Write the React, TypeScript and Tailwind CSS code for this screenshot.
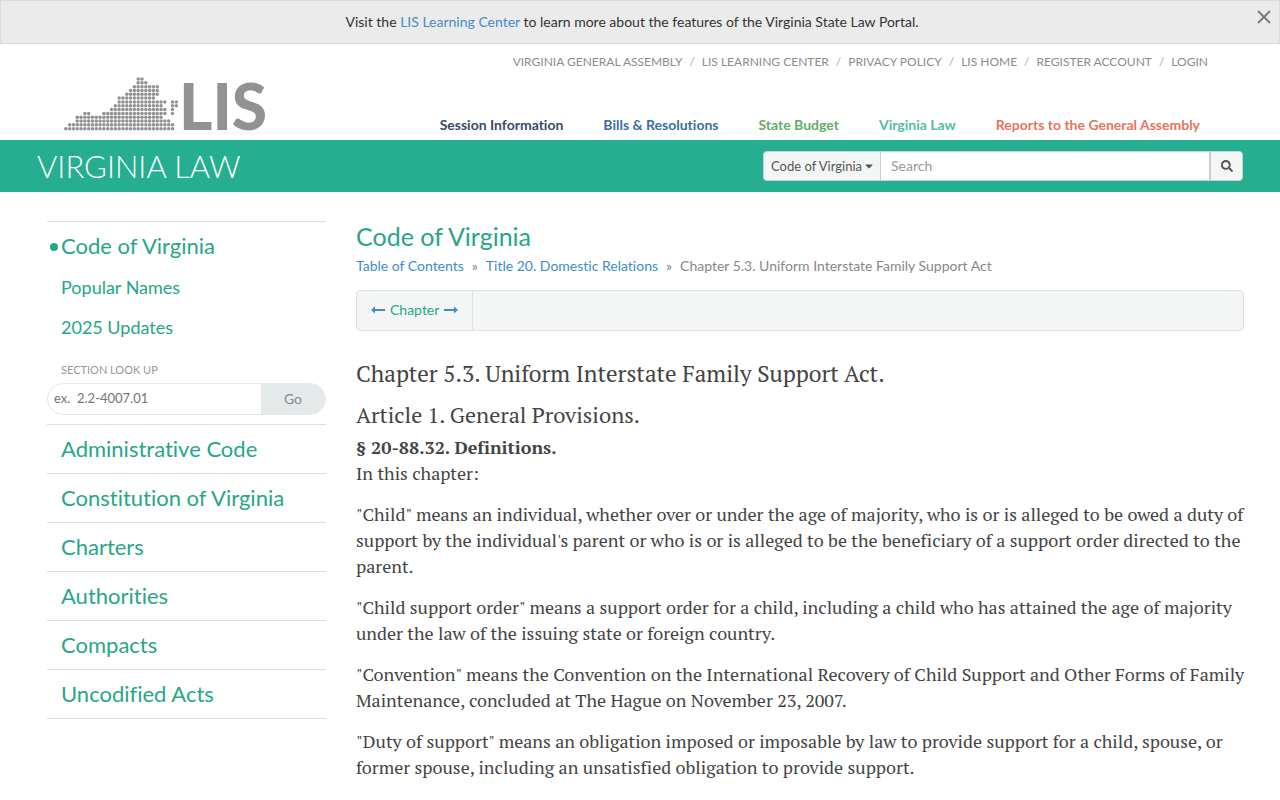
import React, { useState } from 'react';
import { X } from 'lucide-react';
import { FaSearch, FaCaretDown } from 'react-icons/fa';

// [row, first column, last column]
const MAP_RUNS = [
  [0, 19, 20],
  [1, 19, 21],
  [2, 18, 24],
  [3, 17, 24],
  [4, 16, 24],
  [5, 14, 23],
  [6, 14, 26], [6, 28, 29],
  [7, 13, 25], [7, 28, 29],
  [8, 12, 26], [8, 28, 28],
  [9, 5, 6], [9, 10, 26], [9, 28, 28],
  [10, 3, 25],
  [11, 3, 27],
  [12, 1, 28],
  [13, 0, 28],
];

const topLinks = ['Virginia General Assembly', 'LIS Learning Center', 'Privacy Policy', 'LIS Home', 'Register Account', 'Login'];

const portals = [
  { label: 'Session Information', color: 'text-[#3b4a66]' },
  { label: 'Bills & Resolutions', color: 'text-[#3a6ea5]' },
  { label: 'State Budget', color: 'text-[#5fad6c]' },
  { label: 'Virginia Law', color: 'text-[#54bfa3]' },
  { label: 'Reports to the General Assembly', color: 'text-[#e8735f]' },
];

const sections = ['Administrative Code', 'Constitution of Virginia', 'Charters', 'Authorities', 'Compacts', 'Uncodified Acts'];

const definitions = [
  '"Child" means an individual, whether over or under the age of majority, who is or is alleged to be owed a duty of support by the individual\'s parent or who is or is alleged to be the beneficiary of a support order directed to the parent.',
  '"Child support order" means a support order for a child, including a child who has attained the age of majority under the law of the issuing state or foreign country.',
  '"Convention" means the Convention on the International Recovery of Child Support and Other Forms of Family Maintenance, concluded at The Hague on November 23, 2007.',
  '"Duty of support" means an obligation imposed or imposable by law to provide support for a child, spouse, or former spouse, including an unsatisfied obligation to provide support.',
];

const Logo: React.FC = () => {
  const dots: React.ReactNode[] = [];
  MAP_RUNS.forEach(([row, from, to]) => {
    for (let col = from; col <= to; col++) {
      dots.push(<circle key={`${row}-${col}`} cx={1.8 + col * 3.81} cy={2 + row * 3.82} r="1.75" />);
    }
  });

  return (
    <svg width="208" height="56" viewBox="0 0 208 56" className="overflow-visible fill-[#929292]" role="img" aria-label="LIS">
      {dots}
      <text x="115" y="53" className="font-['Lato',sans-serif] text-[64px] font-black">LIS</text>
    </svg>
  );
};

const Arrow: React.FC<{ flip?: boolean }> = ({ flip }) => (
  <svg width="14" height="8" viewBox="0 0 14 8" className={flip ? 'rotate-180 fill-[#428bca]' : 'fill-[#428bca]'}>
    <path d="M0 4 L4 0.6 V3 H14 V5 H4 V7.4 Z" />
  </svg>
);

const Header: React.FC = () => (
  <header>
    <div className="flex items-start justify-between pl-16 pr-[72px] pt-2.5 h-24">
      <a href="#" className="mt-[23px]"><Logo /></a>
      <div className="flex flex-col items-end">
        <ul className="flex text-xs uppercase text-[#8c8c8c]">
          {topLinks.map((link, i) => (
            <li key={link}>
              {i > 0 && <span className="px-[7px] text-[#aaa]">/</span>}
              <a href="#">{link}</a>
            </li>
          ))}
        </ul>
        <nav className="flex gap-10 mt-[45px] pr-2 text-sm font-bold">
          {portals.map((p) => (
            <a key={p.label} href="#" className={p.color}>{p.label}</a>
          ))}
        </nav>
      </div>
    </div>

    <div className="flex items-center justify-between h-[52px] px-[37px] bg-[#26ae90]">
      <a href="#" className="text-[31px] font-light uppercase text-white">Virginia Law</a>
      <form className="flex w-[480px] h-[30px] rounded-sm overflow-hidden border border-[#c4d6d2] bg-white text-sm" onSubmit={(e) => e.preventDefault()}>
        <div className="relative w-[117px] border-r border-[#ccc] bg-[#f4f6f6]">
          <select aria-label="Search in" className="appearance-none w-full h-full pl-[7px] text-[13px] text-[#555] outline-none">
            <option>Code of Virginia</option>
          </select>
          <FaCaretDown className="absolute right-[5px] top-2 size-3 text-[#555] pointer-events-none" />
        </div>
        <input type="text" aria-label="Search" placeholder="Search" className="flex-1 min-w-0 px-2.5 outline-none placeholder:text-[#999]" />
        <button type="submit" aria-label="Submit search" className="flex items-center justify-center w-[33px] border-l-2 border-[#ccc] bg-[#f4f6f6] text-[#555]">
          <FaSearch className="size-3" />
        </button>
      </form>
    </div>
  </header>
);

const Sidebar: React.FC = () => (
  <aside className="w-[279px] shrink-0 text-[#27a688]">
    <div className="border-t border-[#ddd] pt-[7px]">
      <a href="#" className="flex items-center h-8 pl-[3px] text-[22px]">
        <span className="w-[11px] shrink-0 flex pt-1"><span className="size-2 rounded-full bg-[#27a688]" /></span>
        Code of Virginia
      </a>
      <a href="#" className="flex items-center h-10 mt-1.5 pl-3.5 text-lg">Popular Names</a>
      <a href="#" className="flex items-center h-10 pl-3.5 text-lg">2025 Updates</a>
      <form className="pt-[15px]" onSubmit={(e) => e.preventDefault()}>
        <label htmlFor="lookup" className="block pl-3.5 text-[11px] leading-4 uppercase text-[#999]">Section Look Up</label>
        <div className="flex h-8 mt-[5px] mb-[9px] rounded-full overflow-hidden border border-[#e4e8e8]">
          <input id="lookup" type="text" placeholder="ex.  2.2-4007.01" className="flex-1 min-w-0 pl-1.5 text-[13px] outline-none placeholder:text-[#757575]" />
          <button type="submit" className="w-16 bg-[#e4e9ea] text-sm text-[#7f8c8d]">Go</button>
        </div>
      </form>
    </div>
    <ul className="border-b border-[#ddd]">
      {sections.map((s) => (
        <li key={s} className="border-t border-[#ddd]">
          <a href="#" className="flex items-center h-12 pl-3.5 pb-0.5 text-[22px]">{s}</a>
        </li>
      ))}
    </ul>
  </aside>
);

const Article: React.FC = () => (
  <main className="flex-1 min-w-0">
    <h1 className="text-[25px] leading-[30px] text-[#27a688]">Code of Virginia</h1>
    <div className="flex gap-2 mt-[5px] text-sm text-[#888]">
      <a href="#" className="text-[#428bca]">Table of Contents</a>
      <span>»</span>
      <a href="#" className="text-[#428bca]">Title 20. Domestic Relations</a>
      <span>»</span>
      <span>Chapter 5.3. Uniform Interstate Family Support Act</span>
    </div>

    <div className="flex h-[41px] mt-3.5 mr-0.5 border border-[#dde2e2] rounded bg-[#f4f6f6] text-sm">
      <div className="flex items-center gap-[5px] px-3.5 pb-0.5 border-r border-[#dde2e2]">
        <a href="#" aria-label="Previous chapter"><Arrow /></a>
        <a href="#" className="text-[#27a688]">Chapter</a>
        <a href="#" aria-label="Next chapter"><Arrow flip /></a>
      </div>
    </div>

    <div className="mt-[27px] font-['PT_Serif','Liberation_Serif',serif] text-lg leading-[26px] text-[#444]">
      <h2 className="text-[23px] leading-8">Chapter 5.3. Uniform Interstate Family Support Act.</h2>
      <h3 className="mt-[9px] text-[22px] leading-8">Article 1. General Provisions.</h3>
      <h4 className="mt-[3px] font-bold">§ 20-88.32. Definitions.</h4>
      <p>In this chapter:</p>
      {definitions.map((text) => (
        <p key={text} className="mt-[15px]">{text}</p>
      ))}
    </div>
  </main>
);

export default function App() {
  const [noticeOpen, setNoticeOpen] = useState(true);

  return (
    <div className="font-['Lato',sans-serif] [font-variant-ligatures:no-common-ligatures] bg-white text-[#333]">
      {noticeOpen && (
        <div className="relative flex items-center justify-center h-11 border border-[#dcdcdc] bg-[#ebebeb] text-sm">
          <p className="-ml-4">
            Visit the <a href="#" className="text-[#428bca]">LIS Learning Center</a> to learn more about the features of the Virginia State Law Portal.
          </p>
          <button type="button" aria-label="Close" className="absolute right-1 top-[5px] text-[#777]" onClick={() => setNoticeOpen(false)}>
            <X className="size-[22px]" />
          </button>
        </div>
      )}
      <Header />
      <div className="flex gap-[30px] pt-[29px] pl-[47px] pr-[34px]">
        <Sidebar />
        <Article />
      </div>
    </div>
  );
}
